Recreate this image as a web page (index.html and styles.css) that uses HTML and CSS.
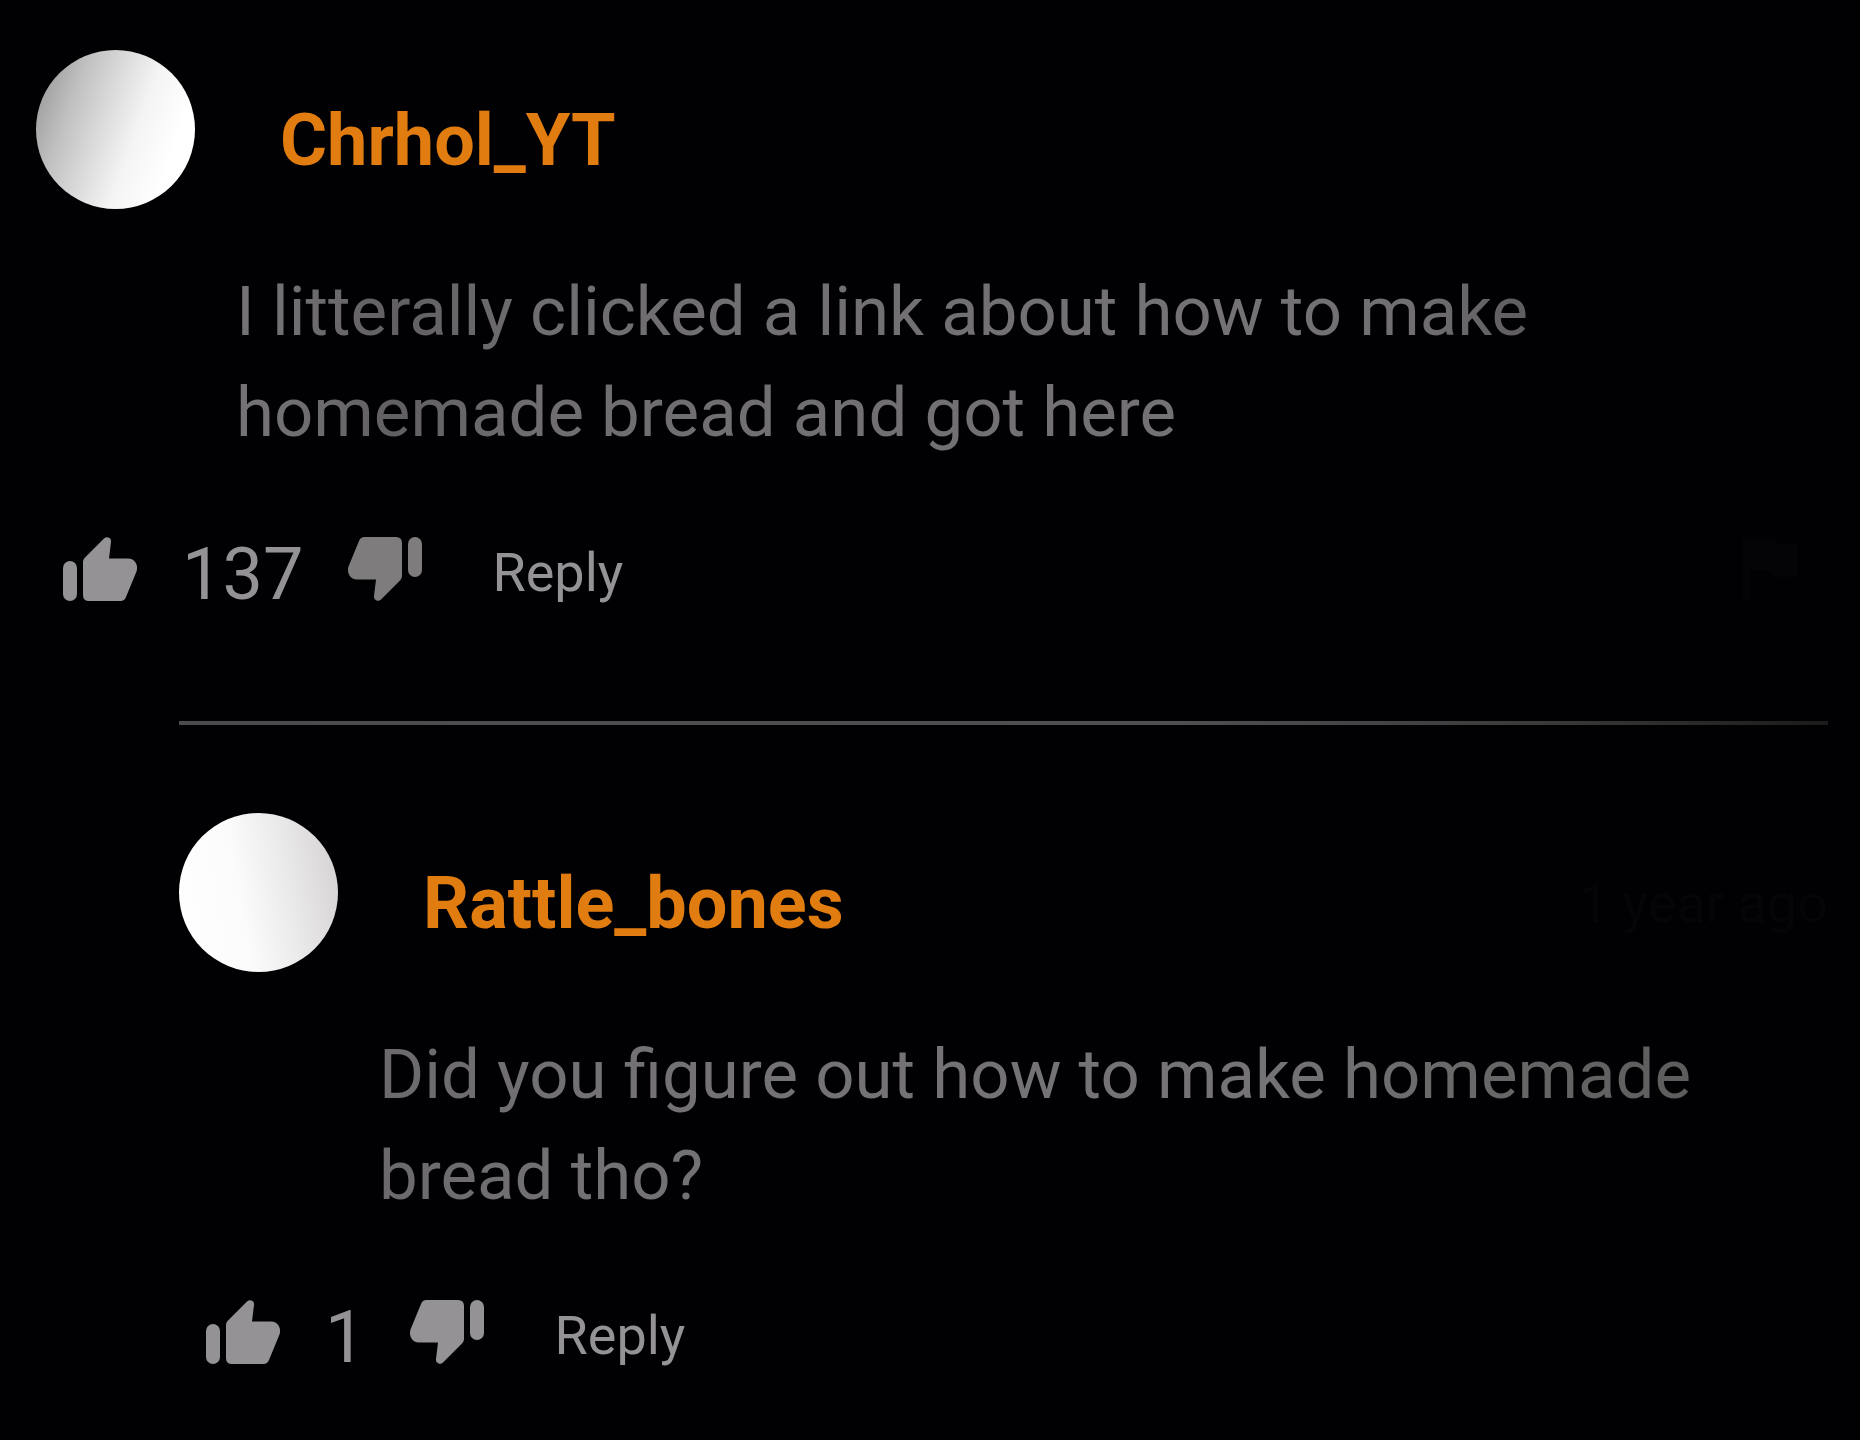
FILE: index.html
```html
<!DOCTYPE html>
<html lang="en">
<head>
    <meta charset="utf-8">
    <title>Comments</title>
    <link rel="stylesheet" href="styles.css">
</head>
<body>
    <svg class="sprite" aria-hidden="true">
        <symbol id="thumb" viewBox="0 0 74 64">
            <rect x="0" y="24" width="14" height="40" rx="7"/>
            <path d="M20 25Q20 22.500 21.500 21L41 1.500Q43 -.5 45.500 .5Q48.500 1.500 48 5L46 21.500H65Q70 21.500 72.500 25.500Q75 29.500 73.500 34.500L63 60Q61.500 64 57.500 64H26Q20 64 20 58Z"/>
        </symbol>
    </svg>

    <main class="comments">
        <article class="comment">
            <header class="comment-header">
                <div class="avatar avatar-left-shade"></div>
                <h2 class="username">Chrhol_YT</h2>
            </header>
            <p class="comment-text">I litterally clicked a link about how to make homemade bread and got here</p>
            <div class="actions">
                <button class="icon-button" aria-label="Like"><svg class="icon"><use href="#thumb"/></svg></button>
                <span class="count">137</span>
                <button class="icon-button dislike muted" aria-label="Dislike"><svg class="icon"><use href="#thumb"/></svg></button>
                <button class="reply-button">Reply</button>
                <button class="icon-button flag" aria-label="Report"><svg class="icon" viewBox="0 0 60 64"><path d="M2 0H34L37 7H56V40H32L29 33H9V64H2Z"/></svg></button>
            </div>
        </article>

        <article class="comment reply">
            <header class="comment-header">
                <div class="avatar avatar-right-shade"></div>
                <h2 class="username">Rattle_bones</h2>
                <time class="time">1 year ago</time>
            </header>
            <p class="comment-text">Did you figure out how to make homemade bread tho?</p>
            <div class="actions">
                <button class="icon-button" aria-label="Like"><svg class="icon"><use href="#thumb"/></svg></button>
                <span class="count">1</span>
                <button class="icon-button dislike" aria-label="Dislike"><svg class="icon"><use href="#thumb"/></svg></button>
                <button class="reply-button">Reply</button>
            </div>
        </article>
    </main>
</body>
</html>
```
FILE: styles.css
```css
body {
    margin: 0;
    background-color: #010002;
    color: #949294;
    font-family: Roboto, Arial, sans-serif;
}
.sprite {
    display: block;
    width: 0;
    height: 0;
}
.comments {
    padding: 50px 32px 60px 36px;
}
.comment-header {
    display: flex;
    align-items: center;
}
.avatar {
    flex-shrink: 0;
    width: 159px;
    height: 159px;
    border-radius: 50%;
}
.avatar-left-shade {
    background: linear-gradient(110deg, #8e8e8e 0%, #c0c0c0 25%, #dadada 42%, #f4f4f4 60%, #ffffff 80%);
}
.avatar-right-shade {
    background: linear-gradient(80deg, #ffffff 0%, #fbfbfb 40%, #ecebec 65%, #d2cfd1 100%);
}
.username {
    margin: 0 0 0 85px;
    padding-top: 23px;
    font-size: 72px;
    line-height: 84px;
    font-weight: 700;
    color: #e07c10;
}
.time {
    margin-left: auto;
    padding-top: 22px;
    font-size: 54px;
    color: #050406;
}
.comment-text {
    margin: 52px 0 70px;
    padding-left: 200px;
    font-size: 69px;
    line-height: 101px;
    color: transparent;
    background: linear-gradient(90deg, #747274 13%, #615f61 20%, #6f6d70 28%, #747275 68%, #706e71 77%, #5c5a5c 84%);
    background-clip: text;
    -webkit-background-clip: text;
}
.actions {
    display: flex;
    align-items: center;
    padding-left: 27px;
    padding-right: 20px;
}
button {
    padding: 0;
    border: none;
    background: none;
    color: inherit;
    font-family: inherit;
    cursor: pointer;
}
.icon-button {
    height: 76px;
}
.icon {
    display: block;
    width: 74px;
    height: 64px;
    margin-bottom: 12px;
    fill: currentColor;
}
.dislike .icon {
    transform: rotate(180deg);
}
.muted {
    color: #7f7c7d;
}
.count {
    margin: 0 45px;
    font-size: 72px;
    line-height: 84px;
}
.reply-button {
    margin-left: 70px;
    padding-bottom: 5px;
    font-size: 54px;
}
.flag {
    margin-left: auto;
    color: #040305;
}
.reply {
    margin-top: 104px;
    margin-left: 143px;
    padding-top: 88px;
    border-top: 4px solid;
    border-image: linear-gradient(90deg, #4c4a4c 0%, #504e50 60%, #3c3b3c 82%, #1c1b1c 100%) 1;
}
.reply .comment-text {
    background-image: linear-gradient(90deg, #6b696b 12%, #737173 25%, #757375 65%, #5e5d5e 91%);
}
```
